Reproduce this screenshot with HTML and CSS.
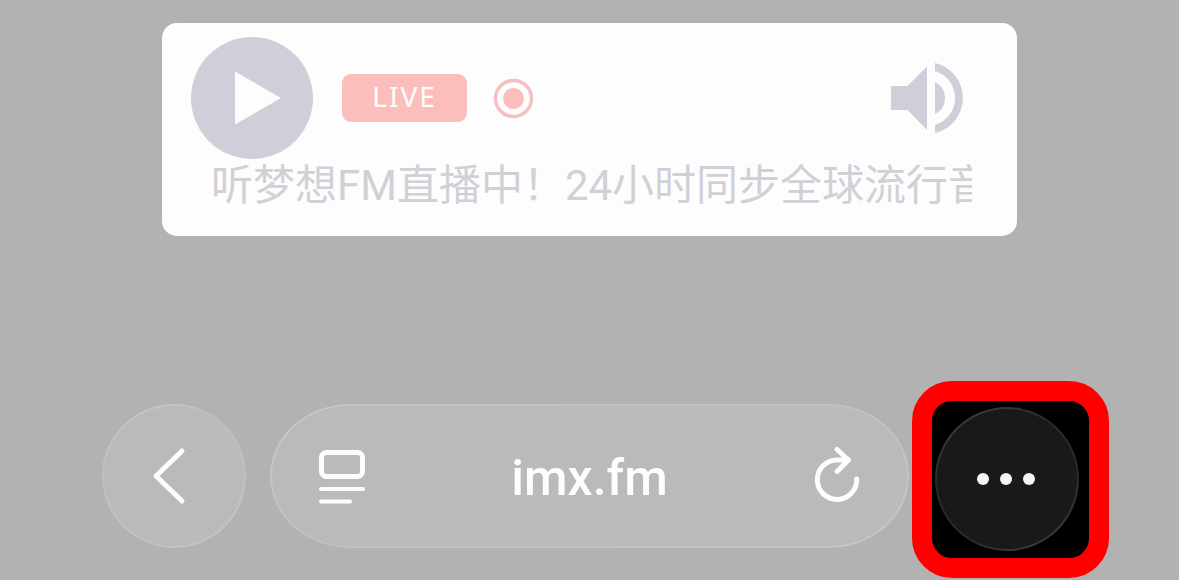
FILE: index.html
```
<!DOCTYPE html>
<html lang="zh-CN">

<head>
    <meta charset="UTF-8">
    <meta name="viewport" content="width=device-width, initial-scale=1.0">
    <title>imx.fm</title>
    <link rel="stylesheet" href="styles.css">
</head>

<body>
    <main class="player">
        <div class="controls">
            <button class="play" type="button" aria-label="播放">
                <svg viewBox="0 0 122 122">
                    <path d="M44 34.500L90 61L44 87.500Z" />
                </svg>
            </button>
            <span class="live">LIVE</span>
            <svg class="record" viewBox="0 0 40 40">
                <circle class="ring" cx="20.500" cy="20.500" r="18" />
                <circle class="dot" cx="20.500" cy="20.500" r="10.500" />
            </svg>
            <button class="volume" type="button" aria-label="音量">
                <svg viewBox="0 0 72 72">
                    <path d="M0 24H16.500L36 4.500V68L16.500 48H0Z" />
                    <path d="M44 20A17.800 17.800 0 0 1 44 52Z" />
                    <path d="M44 1A35.900 35.900 0 0 1 44 71V63A28.200 28.200 0 0 0 44 9Z" />
                </svg>
            </button>
        </div>
        <p class="marquee">听梦想FM直播中！24小时同步全球流行音</p>
    </main>

    <nav class="toolbar">
        <button class="glass back" type="button" aria-label="返回">
            <svg viewBox="0 0 32 56">
                <path d="M29 3L3 28L29 53" />
            </svg>
        </button>
        <form class="glass address">
            <button class="tool" type="button" aria-label="页面菜单">
                <svg viewBox="0 0 48 56">
                    <rect x="3.500" y="4.500" width="41" height="24" rx="5" />
                    <path class="line" d="M3 41H45M3 53.500H32" />
                </svg>
            </button>
            <input class="url" type="text" value="imx.fm" aria-label="网址">
            <button class="tool" type="button" aria-label="刷新">
                <svg viewBox="0 0 48 56">
                    <path d="M35.500 12H24A19.700 19.700 0 1 0 43.700 31M24 1.500L35.500 12L24 23.500" />
                </svg>
            </button>
        </form>
        <div class="highlight">
            <button class="glass more" type="button" aria-label="更多">
                <svg viewBox="0 0 60 12">
                    <circle cx="6" cy="6" r="6" />
                    <circle cx="29" cy="6" r="6" />
                    <circle cx="52" cy="6" r="6" />
                </svg>
            </button>
        </div>
    </nav>
</body>

</html>
```
FILE: styles.css
```
* {
    margin: 0;
    padding: 0;
    box-sizing: border-box;
}

body {
    min-height: 100vh;
    padding-top: 23px;
    background-color: #b2b2b2;
    font-family: Roboto, "Noto Sans CJK SC", sans-serif;
    display: flex;
    flex-direction: column;
    justify-content: space-between;
    overflow: hidden;
}

button {
    border: none;
    background: none;
    cursor: pointer;
}

svg {
    display: block;
    overflow: visible;
}

/* 播放器 */
.player {
    margin: 0 162px;
    padding: 14px 45px 24px 29px;
    border-radius: 15px;
    background-color: #fdfdfd;
}

.controls {
    display: flex;
    align-items: center;
}

.play {
    width: 122px;
    height: 122px;
    border-radius: 50%;
    background-color: #cecfd8;
}

.play svg {
    fill: #fdfdfd;
}

.live {
    width: 125px;
    height: 48px;
    margin-left: 29px;
    border-radius: 9px;
    background-color: #fbbebc;
    color: #fdfdfd;
    font-family: "Noto Sans", sans-serif;
    font-size: 28px;
    font-weight: 400;
    letter-spacing: 2px;
    line-height: 45px;
    text-align: center;
}

.record {
    width: 40px;
    height: 40px;
    margin-left: 26px;
}

.ring {
    fill: none;
    stroke: #f4c0c4;
    stroke-width: 3.5;
}

.dot {
    fill: #fbbebc;
}

.volume {
    width: 72px;
    height: 72px;
    margin-left: auto;
    margin-right: 9px;
}

.volume svg {
    fill: #cecfd8;
}

/* 滚动文字，超出部分裁掉 */
.marquee {
    margin-left: 20px;
    overflow: hidden;
    white-space: nowrap;
    color: #d0d1d6;
    font-size: 42px;
    line-height: 53px;
}

/* 底部工具栏 */
.toolbar {
    display: flex;
    align-items: flex-start;
    padding: 0 70px 2px 102px;
}

.glass {
    height: 144px;
    border: 2px solid transparent;
    background:
        linear-gradient(#bababa, #bababa) padding-box,
        linear-gradient(150deg, #c7c7c7, #c0c0c0 35%, #c0c0c0 65%, #c7c7c7) border-box;
}

.toolbar svg {
    fill: none;
    stroke: #fdfdfd;
    stroke-width: 5;
    stroke-linecap: round;
    stroke-linejoin: round;
}

.back {
    flex: none;
    width: 144px;
    margin-top: 23px;
    padding-left: 49px;
    border-radius: 50%;
}

.back svg {
    width: 32px;
    height: 56px;
}

.address {
    flex: 1;
    min-width: 0;
    margin: 23px 3px 0 24px;
    padding: 0 46px;
    border-radius: 80px / 72px;
    display: flex;
    align-items: center;
}

.tool {
    flex: none;
    width: 48px;
}

.tool .line {
    stroke-width: 4;
}

.url {
    flex: 1;
    min-width: 0;
    padding-top: 4px;
    border: none;
    outline: none;
    background: none;
    color: #fdfdfd;
    font-family: Roboto, sans-serif;
    font-size: 50px;
    font-weight: 500;
    text-align: center;
}

/* 红框标注 */
.highlight {
    flex: none;
    width: 197px;
    height: 197px;
    padding: 6px 3px;
    border: 20px solid #f00;
    border-radius: 40px;
    background-color: #000;
}

.more {
    width: 144px;
    border-radius: 50%;
    background:
        linear-gradient(#191919, #191919) padding-box,
        linear-gradient(150deg, #444, #2a2a2a 35%, #2a2a2a 65%, #444) border-box;
}

.toolbar .more svg {
    width: 60px;
    height: 12px;
    margin: 0 auto;
    fill: #f5f5f5;
    stroke: none;
}
```
